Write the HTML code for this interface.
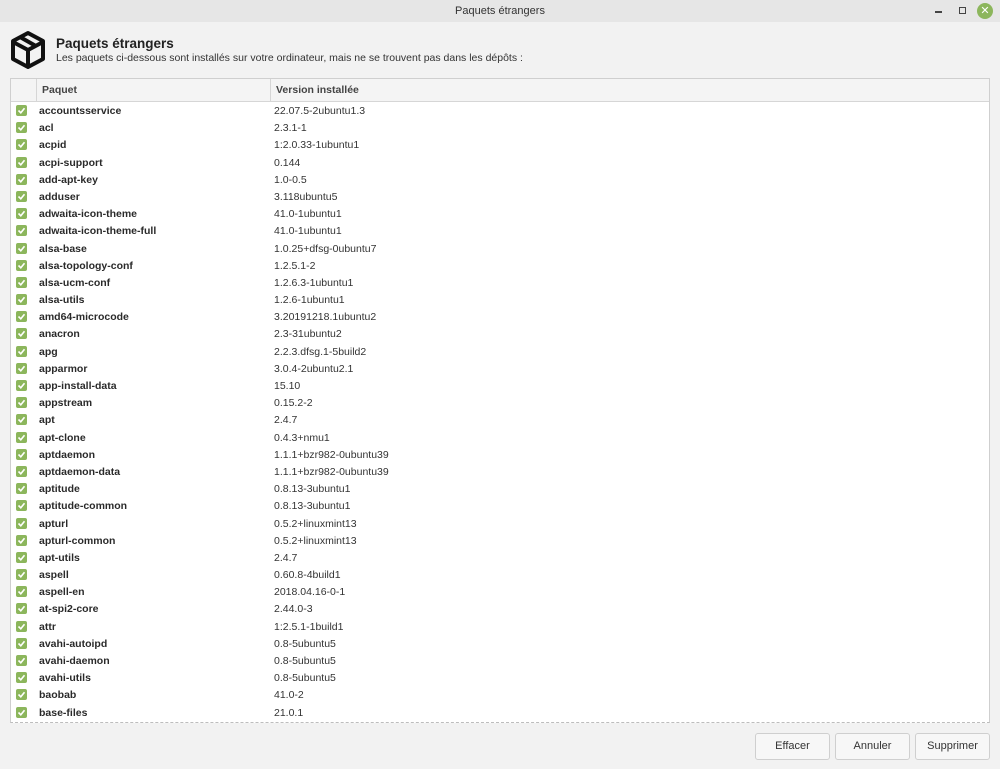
<!DOCTYPE html>
<html><head><meta charset="utf-8"><style>
*{margin:0;padding:0;box-sizing:border-box}
body{width:1000px;height:769px;background:#f2f2f2;font-family:"Liberation Sans","DejaVu Sans",sans-serif;position:relative;overflow:hidden;color:#2e2e2e}
.tb{position:absolute;left:0;top:0;width:1000px;height:22px;background:#e6e6e6;text-align:center;font-size:11px;line-height:22px;color:#333}
.h1{position:absolute;left:56px;top:36px;font-size:13.5px;font-weight:bold;color:#222;white-space:nowrap}
.h2{position:absolute;left:56px;top:52px;font-size:10.5px;color:#333;white-space:nowrap}
.box{position:absolute;left:10px;top:78px;width:980px;height:645px;background:#fff;border:1px solid #cfcfcf;border-bottom:1px dashed #bdbdbd;overflow:hidden}
.hd{height:23px;background:#f4f4f4;border-bottom:1px solid #d6d6d6;position:relative;font-size:10.5px;font-weight:bold;color:#444}
.hd span{position:absolute;top:0;line-height:23px;height:23px;border-left:1px solid #d6d6d6;padding-left:5px;white-space:nowrap}
.row{height:17.2px;position:relative;font-size:10.5px;line-height:17.2px;white-space:nowrap}
.cb{position:absolute;left:6px;top:3px;width:11px;height:11px;background:#8cb65c;border-radius:2px}
.cb svg{position:absolute;left:1px;top:1px}
.n{position:absolute;top:1px;left:29px;font-weight:bold;color:#2a2a2a;white-space:nowrap}
.v{position:absolute;top:1px;left:264px;color:#333;white-space:nowrap}
.btn{position:absolute;top:733px;height:27px;width:75px;border:1px solid #cfcfcf;border-radius:3px;background:#f7f7f7;font-size:11px;text-align:center;line-height:25px;color:#333}
</style></head><body>
<div class="tb">Paquets étrangers</div>
<div style="position:absolute;left:935px;top:11px;width:7px;height:1.5px;background:#444"></div>
<div style="position:absolute;left:959px;top:7px;width:7px;height:7px;border:1.5px solid #444"></div>
<div style="position:absolute;left:977px;top:3px;width:16px;height:16px;border-radius:50%;background:#8cb65c;color:#fff;font-size:11px;line-height:16px;text-align:center">✕</div>
<svg style="position:absolute;left:10px;top:30px" width="36" height="40" viewBox="0 0 36 40"><g fill="none" stroke="#111" stroke-width="4" stroke-linejoin="round"><path d="M18 3 L33 11 L33 29 L18 37 L3 29 L3 11 Z"/><path d="M3 12 L18 20 L33 12 M18 20 L18 37 M10 7 L25 15.5"/></g></svg>
<div class="h1">Paquets étrangers</div>
<div class="h2">Les paquets ci-dessous sont installés sur votre ordinateur, mais ne se trouvent pas dans les dépôts :</div>
<div class="box">
<div class="hd"><span style="left:25px;width:235px">Paquet</span><span style="left:259px;width:720px">Version installée</span></div>
</div>
<div class="btn" style="left:755px">Effacer</div>
<div class="btn" style="left:835px">Annuler</div>
<div class="btn" style="left:915px">Supprimer</div>
<div style="position:absolute;left:10px;top:102px;width:980px;height:620px;overflow:hidden">
<div class="row"><div class="cb"><svg width="9" height="9"><path d="M1.5 4.5 L3.8 6.8 L7.5 2.2" stroke="#fff" stroke-width="1.6" fill="none"/></svg></div><span class="n">accountsservice</span><span class="v">22.07.5-2ubuntu1.3</span></div>
<div class="row"><div class="cb"><svg width="9" height="9"><path d="M1.5 4.5 L3.8 6.8 L7.5 2.2" stroke="#fff" stroke-width="1.6" fill="none"/></svg></div><span class="n">acl</span><span class="v">2.3.1-1</span></div>
<div class="row"><div class="cb"><svg width="9" height="9"><path d="M1.5 4.5 L3.8 6.8 L7.5 2.2" stroke="#fff" stroke-width="1.6" fill="none"/></svg></div><span class="n">acpid</span><span class="v">1:2.0.33-1ubuntu1</span></div>
<div class="row"><div class="cb"><svg width="9" height="9"><path d="M1.5 4.5 L3.8 6.8 L7.5 2.2" stroke="#fff" stroke-width="1.6" fill="none"/></svg></div><span class="n">acpi-support</span><span class="v">0.144</span></div>
<div class="row"><div class="cb"><svg width="9" height="9"><path d="M1.5 4.5 L3.8 6.8 L7.5 2.2" stroke="#fff" stroke-width="1.6" fill="none"/></svg></div><span class="n">add-apt-key</span><span class="v">1.0-0.5</span></div>
<div class="row"><div class="cb"><svg width="9" height="9"><path d="M1.5 4.5 L3.8 6.8 L7.5 2.2" stroke="#fff" stroke-width="1.6" fill="none"/></svg></div><span class="n">adduser</span><span class="v">3.118ubuntu5</span></div>
<div class="row"><div class="cb"><svg width="9" height="9"><path d="M1.5 4.5 L3.8 6.8 L7.5 2.2" stroke="#fff" stroke-width="1.6" fill="none"/></svg></div><span class="n">adwaita-icon-theme</span><span class="v">41.0-1ubuntu1</span></div>
<div class="row"><div class="cb"><svg width="9" height="9"><path d="M1.5 4.5 L3.8 6.8 L7.5 2.2" stroke="#fff" stroke-width="1.6" fill="none"/></svg></div><span class="n">adwaita-icon-theme-full</span><span class="v">41.0-1ubuntu1</span></div>
<div class="row"><div class="cb"><svg width="9" height="9"><path d="M1.5 4.5 L3.8 6.8 L7.5 2.2" stroke="#fff" stroke-width="1.6" fill="none"/></svg></div><span class="n">alsa-base</span><span class="v">1.0.25+dfsg-0ubuntu7</span></div>
<div class="row"><div class="cb"><svg width="9" height="9"><path d="M1.5 4.5 L3.8 6.8 L7.5 2.2" stroke="#fff" stroke-width="1.6" fill="none"/></svg></div><span class="n">alsa-topology-conf</span><span class="v">1.2.5.1-2</span></div>
<div class="row"><div class="cb"><svg width="9" height="9"><path d="M1.5 4.5 L3.8 6.8 L7.5 2.2" stroke="#fff" stroke-width="1.6" fill="none"/></svg></div><span class="n">alsa-ucm-conf</span><span class="v">1.2.6.3-1ubuntu1</span></div>
<div class="row"><div class="cb"><svg width="9" height="9"><path d="M1.5 4.5 L3.8 6.8 L7.5 2.2" stroke="#fff" stroke-width="1.6" fill="none"/></svg></div><span class="n">alsa-utils</span><span class="v">1.2.6-1ubuntu1</span></div>
<div class="row"><div class="cb"><svg width="9" height="9"><path d="M1.5 4.5 L3.8 6.8 L7.5 2.2" stroke="#fff" stroke-width="1.6" fill="none"/></svg></div><span class="n">amd64-microcode</span><span class="v">3.20191218.1ubuntu2</span></div>
<div class="row"><div class="cb"><svg width="9" height="9"><path d="M1.5 4.5 L3.8 6.8 L7.5 2.2" stroke="#fff" stroke-width="1.6" fill="none"/></svg></div><span class="n">anacron</span><span class="v">2.3-31ubuntu2</span></div>
<div class="row"><div class="cb"><svg width="9" height="9"><path d="M1.5 4.5 L3.8 6.8 L7.5 2.2" stroke="#fff" stroke-width="1.6" fill="none"/></svg></div><span class="n">apg</span><span class="v">2.2.3.dfsg.1-5build2</span></div>
<div class="row"><div class="cb"><svg width="9" height="9"><path d="M1.5 4.5 L3.8 6.8 L7.5 2.2" stroke="#fff" stroke-width="1.6" fill="none"/></svg></div><span class="n">apparmor</span><span class="v">3.0.4-2ubuntu2.1</span></div>
<div class="row"><div class="cb"><svg width="9" height="9"><path d="M1.5 4.5 L3.8 6.8 L7.5 2.2" stroke="#fff" stroke-width="1.6" fill="none"/></svg></div><span class="n">app-install-data</span><span class="v">15.10</span></div>
<div class="row"><div class="cb"><svg width="9" height="9"><path d="M1.5 4.5 L3.8 6.8 L7.5 2.2" stroke="#fff" stroke-width="1.6" fill="none"/></svg></div><span class="n">appstream</span><span class="v">0.15.2-2</span></div>
<div class="row"><div class="cb"><svg width="9" height="9"><path d="M1.5 4.5 L3.8 6.8 L7.5 2.2" stroke="#fff" stroke-width="1.6" fill="none"/></svg></div><span class="n">apt</span><span class="v">2.4.7</span></div>
<div class="row"><div class="cb"><svg width="9" height="9"><path d="M1.5 4.5 L3.8 6.8 L7.5 2.2" stroke="#fff" stroke-width="1.6" fill="none"/></svg></div><span class="n">apt-clone</span><span class="v">0.4.3+nmu1</span></div>
<div class="row"><div class="cb"><svg width="9" height="9"><path d="M1.5 4.5 L3.8 6.8 L7.5 2.2" stroke="#fff" stroke-width="1.6" fill="none"/></svg></div><span class="n">aptdaemon</span><span class="v">1.1.1+bzr982-0ubuntu39</span></div>
<div class="row"><div class="cb"><svg width="9" height="9"><path d="M1.5 4.5 L3.8 6.8 L7.5 2.2" stroke="#fff" stroke-width="1.6" fill="none"/></svg></div><span class="n">aptdaemon-data</span><span class="v">1.1.1+bzr982-0ubuntu39</span></div>
<div class="row"><div class="cb"><svg width="9" height="9"><path d="M1.5 4.5 L3.8 6.8 L7.5 2.2" stroke="#fff" stroke-width="1.6" fill="none"/></svg></div><span class="n">aptitude</span><span class="v">0.8.13-3ubuntu1</span></div>
<div class="row"><div class="cb"><svg width="9" height="9"><path d="M1.5 4.5 L3.8 6.8 L7.5 2.2" stroke="#fff" stroke-width="1.6" fill="none"/></svg></div><span class="n">aptitude-common</span><span class="v">0.8.13-3ubuntu1</span></div>
<div class="row"><div class="cb"><svg width="9" height="9"><path d="M1.5 4.5 L3.8 6.8 L7.5 2.2" stroke="#fff" stroke-width="1.6" fill="none"/></svg></div><span class="n">apturl</span><span class="v">0.5.2+linuxmint13</span></div>
<div class="row"><div class="cb"><svg width="9" height="9"><path d="M1.5 4.5 L3.8 6.8 L7.5 2.2" stroke="#fff" stroke-width="1.6" fill="none"/></svg></div><span class="n">apturl-common</span><span class="v">0.5.2+linuxmint13</span></div>
<div class="row"><div class="cb"><svg width="9" height="9"><path d="M1.5 4.5 L3.8 6.8 L7.5 2.2" stroke="#fff" stroke-width="1.6" fill="none"/></svg></div><span class="n">apt-utils</span><span class="v">2.4.7</span></div>
<div class="row"><div class="cb"><svg width="9" height="9"><path d="M1.5 4.5 L3.8 6.8 L7.5 2.2" stroke="#fff" stroke-width="1.6" fill="none"/></svg></div><span class="n">aspell</span><span class="v">0.60.8-4build1</span></div>
<div class="row"><div class="cb"><svg width="9" height="9"><path d="M1.5 4.5 L3.8 6.8 L7.5 2.2" stroke="#fff" stroke-width="1.6" fill="none"/></svg></div><span class="n">aspell-en</span><span class="v">2018.04.16-0-1</span></div>
<div class="row"><div class="cb"><svg width="9" height="9"><path d="M1.5 4.5 L3.8 6.8 L7.5 2.2" stroke="#fff" stroke-width="1.6" fill="none"/></svg></div><span class="n">at-spi2-core</span><span class="v">2.44.0-3</span></div>
<div class="row"><div class="cb"><svg width="9" height="9"><path d="M1.5 4.5 L3.8 6.8 L7.5 2.2" stroke="#fff" stroke-width="1.6" fill="none"/></svg></div><span class="n">attr</span><span class="v">1:2.5.1-1build1</span></div>
<div class="row"><div class="cb"><svg width="9" height="9"><path d="M1.5 4.5 L3.8 6.8 L7.5 2.2" stroke="#fff" stroke-width="1.6" fill="none"/></svg></div><span class="n">avahi-autoipd</span><span class="v">0.8-5ubuntu5</span></div>
<div class="row"><div class="cb"><svg width="9" height="9"><path d="M1.5 4.5 L3.8 6.8 L7.5 2.2" stroke="#fff" stroke-width="1.6" fill="none"/></svg></div><span class="n">avahi-daemon</span><span class="v">0.8-5ubuntu5</span></div>
<div class="row"><div class="cb"><svg width="9" height="9"><path d="M1.5 4.5 L3.8 6.8 L7.5 2.2" stroke="#fff" stroke-width="1.6" fill="none"/></svg></div><span class="n">avahi-utils</span><span class="v">0.8-5ubuntu5</span></div>
<div class="row"><div class="cb"><svg width="9" height="9"><path d="M1.5 4.5 L3.8 6.8 L7.5 2.2" stroke="#fff" stroke-width="1.6" fill="none"/></svg></div><span class="n">baobab</span><span class="v">41.0-2</span></div>
<div class="row"><div class="cb"><svg width="9" height="9"><path d="M1.5 4.5 L3.8 6.8 L7.5 2.2" stroke="#fff" stroke-width="1.6" fill="none"/></svg></div><span class="n">base-files</span><span class="v">21.0.1</span></div>
</div>
</body></html>
